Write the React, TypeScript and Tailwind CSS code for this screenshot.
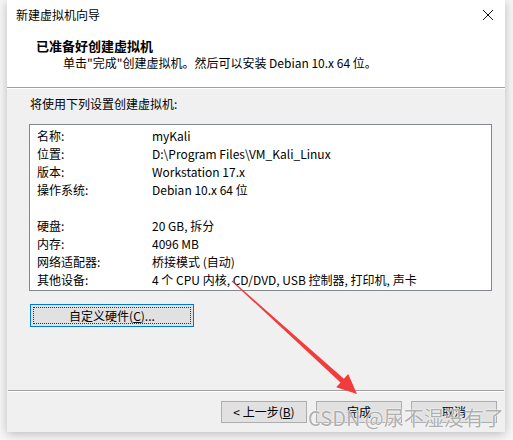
const rows: [string, string][] = [
  ['名称:', 'myKali'],
  ['位置:', 'D:\\Program Files\\VM_Kali_Linux'],
  ['版本:', 'Workstation 17.x'],
  ['操作系统:', 'Debian 10.x 64 位'],
  ['', ''],
  ['硬盘:', '20 GB, 拆分'],
  ['内存:', '4096 MB'],
  ['网络适配器:', '桥接模式 (自动)'],
  ['其他设备:', '4 个 CPU 内核, CD/DVD, USB 控制器, 打印机, 声卡'],
];

const font = "font-['Microsoft_YaHei_UI','Noto_Sans_CJK_SC',sans-serif]";

function WinButton({ children, className = '' }: { children: React.ReactNode; className?: string }) {
  return (
    <div
      className={`h-[22px] w-[86px] flex items-center justify-center border border-[#adadad] bg-[#e1e1e1] text-[12px] text-black ${className}`}
    >
      {children}
    </div>
  );
}

export default function App() {
  return (
    <div className={`relative w-[513px] h-[440px] overflow-hidden bg-[#f7f7f7] ${font}`}>
      <div className="ml-[7px] w-[498px] h-[432px] flex flex-col bg-[#f0f0f0] shadow-[0_2px_10px_rgba(0,0,0,0.25)]">
        {/* title bar + header */}
        <div className="bg-white">
          <div className="h-[30px] flex items-center justify-between pl-[9px] pr-[8px]">
            <span className="text-[12px] text-black">新建虚拟机向导</span>
            <svg width="12" height="12" viewBox="0 0 12 12" className="mr-[3px]">
              <path d="M1 1 L11 11 M11 1 L1 11" stroke="#111" strokeWidth="1" />
            </svg>
          </div>
          <div className="h-[57px] pl-[29px] pt-[7px]">
            <div className="text-[13px] font-bold leading-[18px] text-black">已准备好创建虚拟机</div>
            <div className="pl-[27px] text-[12px] leading-[16px] text-black">
              单击"完成"创建虚拟机。然后可以安装 Debian 10.x 64 位。
            </div>
          </div>
        </div>
        <div className="h-px bg-[#a0a0a0]" />
        <div className="h-px bg-white" />

        {/* body */}
        <div className="flex-1 flex flex-col pl-[22px] pr-[13px]">
          <div className="pt-[6px] pl-[1px] text-[12px] leading-[18px] text-black">将使用下列设置创建虚拟机:</div>
          <div className="mt-[11px] h-[167px] border border-[#828790] bg-white pt-[2px] pl-[7px]">
            {rows.map(([k, v], i) => (
              <div key={i} className="flex h-[18px] items-center text-[12px] text-black">
                <span className="w-[115px] shrink-0">{k}</span>
                <span className="whitespace-nowrap">{v}</span>
              </div>
            ))}
          </div>
          <div className="mt-[13px] ml-[1px] w-[164px] h-[23px] border border-[#0078d7] bg-[#e1e1e1] p-[2px]">
            <div className="h-full border border-dotted border-[#333] flex items-center justify-center text-[12px] text-black">
              自定义硬件(<span className="underline">C</span>)...
            </div>
          </div>
        </div>

        {/* footer */}
        <div className="mx-[1px] h-px bg-[#a0a0a0]" />
        <div className="mx-[1px] h-px bg-white" />
        <div className="h-[40px] flex items-start justify-end gap-[9px] pt-[9px] pr-[8px]">
          <WinButton>
            &lt; 上一步(<span className="underline">B</span>)
          </WinButton>
          <WinButton>完成</WinButton>
          <WinButton>取消</WinButton>
        </div>
      </div>

      {/* annotation arrow */}
      <svg className="absolute left-0 top-0 pointer-events-none" width="513" height="440" viewBox="0 0 513 440">
        <polygon
          points="231.7,281.4 340.5,382.5 336.2,387.3 357,394 348.2,373.9 343.9,378.7 232.3,280.6"
          fill="#f23b3b"
        />
      </svg>

      {/* watermark */}
      <div className="absolute left-[308px] top-[405px] text-[20px] leading-[26px] text-[rgba(140,140,140,0.7)] [text-shadow:0_0_2px_#fff,0_0_1px_#fff] whitespace-nowrap pointer-events-none">
        CSDN @尿不湿没有了
      </div>
    </div>
  );
}
